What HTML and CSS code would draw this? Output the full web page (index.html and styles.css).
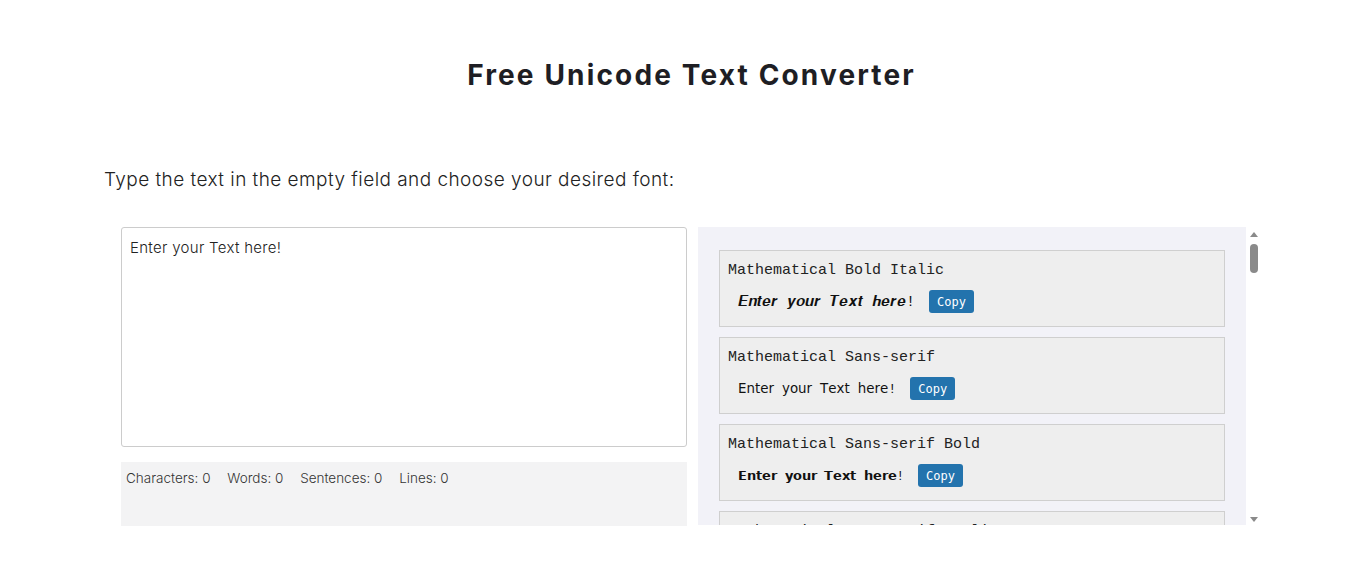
FILE: index.html
```html
<!DOCTYPE html>
<html lang="en">
<head>
    <meta charset="UTF-8">
    <title>Free Unicode Text Converter</title>
    <link rel="stylesheet" href="styles.css">
</head>
<body>
    <div class="page">
        <h1>Free Unicode Text Converter</h1>

        <p class="intro">Type the text in the empty field and choose your desired font:</p>

        <div class="converter">
            <!-- Input side -->
            <div class="input-side">
                <textarea id="inputText">Enter your Text here!</textarea>
                <div class="stats">
                    <span>Characters: 0</span>
                    <span>Words: 0</span>
                    <span>Sentences: 0</span>
                    <span>Lines: 0</span>
                </div>
            </div>

            <!-- Converted fonts -->
            <div class="font-panel">
                <div class="font-list">
                    <div class="font-card">
                        <div class="font-name">Mathematical Bold Italic</div>
                        <div class="font-row">
                            <span class="font-output serif">𝑬𝒏𝒕𝒆𝒓 𝒚𝒐𝒖𝒓 𝑻𝒆𝒙𝒕 𝒉𝒆𝒓𝒆!</span>
                            <button class="copy-btn">Copy</button>
                        </div>
                    </div>
                    <div class="font-card">
                        <div class="font-name">Mathematical Sans-serif</div>
                        <div class="font-row">
                            <span class="font-output sans">𝖤𝗇𝗍𝖾𝗋 𝗒𝗈𝗎𝗋 𝖳𝖾𝗑𝗍 𝗁𝖾𝗋𝖾!</span>
                            <button class="copy-btn">Copy</button>
                        </div>
                    </div>
                    <div class="font-card">
                        <div class="font-name">Mathematical Sans-serif Bold</div>
                        <div class="font-row">
                            <span class="font-output sans-bold">𝗘𝗻𝘁𝗲𝗿 𝘆𝗼𝘂𝗿 𝗧𝗲𝘅𝘁 𝗵𝗲𝗿𝗲!</span>
                            <button class="copy-btn">Copy</button>
                        </div>
                    </div>
                    <div class="font-card">
                        <div class="font-name">Mathematical Sans-serif Italic</div>
                        <div class="font-row">
                            <span class="font-output sans">𝘌𝘯𝘵𝘦𝘳 𝘺𝘰𝘶𝘳 𝘛𝘦𝘹𝘵 𝘩𝘦𝘳𝘦!</span>
                            <button class="copy-btn">Copy</button>
                        </div>
                    </div>
                    <div class="font-card">
                        <div class="font-name">Mathematical Monospace</div>
                        <div class="font-row">
                            <span class="font-output sans">𝙴𝚗𝚝𝚎𝚛 𝚢𝚘𝚞𝚛 𝚃𝚎𝚡𝚝 𝚑𝚎𝚛𝚎!</span>
                            <button class="copy-btn">Copy</button>
                        </div>
                    </div>
                </div>
                <div class="scrollbar">
                    <span class="arrow up"></span>
                    <span class="thumb"></span>
                    <span class="arrow down"></span>
                </div>
            </div>
        </div>
    </div>
</body>
</html>
```

FILE: styles.css
```css
body {
    font-family: "Inter", "Noto Sans", sans-serif;
    background: #ffffff;
    margin: 0;
    color: #222;
}

.page {
    padding: 0 76px 0 104px;
}

h1 {
    font-size: 28px;
    font-weight: 700;
    letter-spacing: 2.15px;
    text-align: center;
    margin: 0;
    padding-top: 56px;
    line-height: 38px;
    color: #1e1e24;
}

.intro {
    font-size: 19px;
    font-weight: 300;
    letter-spacing: 0.45px;
    margin: 73px 0 0;
    line-height: 26px;
    color: #222;
}

.converter {
    display: grid;
    grid-template-columns: 566px 563px;
    gap: 11px;
    margin: 34px 0 0 17px;
}

.input-side textarea {
    display: block;
    box-sizing: border-box;
    width: 566px;
    height: 220px;
    padding: 10px 8px;
    border: 1px solid #ccc;
    border-radius: 3px;
    font-family: "Inter", "Noto Sans", sans-serif;
    font-size: 15px;
    font-weight: 300;
    letter-spacing: 0.3px;
    color: #222;
    resize: none;
}

.stats {
    margin-top: 15px;
    height: 64px;
    box-sizing: border-box;
    padding: 8px 5px;
    background: #f3f3f4;
    font-size: 13.5px;
    font-weight: 300;
    color: #333;
}

.stats span {
    margin-right: 13px;
}

.font-panel {
    display: flex;
    height: 298px;
}

.font-list {
    flex: 1;
    overflow: hidden;
    background: #f2f2f8;
    padding: 23px 21px 0;
}

.scrollbar {
    width: 15px;
    display: flex;
    flex-direction: column;
    align-items: center;
    background: #ffffff;
}

.scrollbar .arrow {
    width: 0;
    height: 0;
    border-left: 4px solid transparent;
    border-right: 4px solid transparent;
}

.scrollbar .up {
    margin-top: 5px;
    border-bottom: 5px solid #8a8a8a;
}

.scrollbar .down {
    margin-top: auto;
    margin-bottom: 3px;
    border-top: 5px solid #8a8a8a;
}

.scrollbar .thumb {
    width: 8px;
    height: 29px;
    margin-top: 7px;
    border-radius: 4px;
    background: #8a8a8a;
}

.font-card {
    background: #eeeeee;
    border: 1px solid #cfcfcf;
    padding: 10px 8px 13px;
    margin-bottom: 10px;
}

.font-name {
    font-family: "Liberation Mono", monospace;
    font-size: 15px;
    line-height: 20px;
    color: #222;
}

.font-row {
    display: flex;
    align-items: center;
    margin-top: 9px;
    padding-left: 10px;
    height: 23px;
}

.font-output {
    font-family: "Liberation Mono", "DejaVu Sans", monospace;
    font-size: 14px;
    color: #111;
}

.font-output.serif {
    font-family: "Liberation Mono", "DejaVu Serif", serif;
    font-size: 15px;
}

.font-output.sans {
    font-size: 13.4px;
}

.font-output.sans-bold {
    font-size: 12.5px;
}

.copy-btn {
    margin-left: 14px;
    background: #2373ad;
    color: white;
    border: none;
    border-radius: 3px;
    height: 23px;
    padding: 0 8px;
    font-family: "DejaVu Sans Mono", monospace;
    font-size: 12px;
    cursor: pointer;
}

.copy-btn:hover {
    background: #1b5e8f;
}
```
